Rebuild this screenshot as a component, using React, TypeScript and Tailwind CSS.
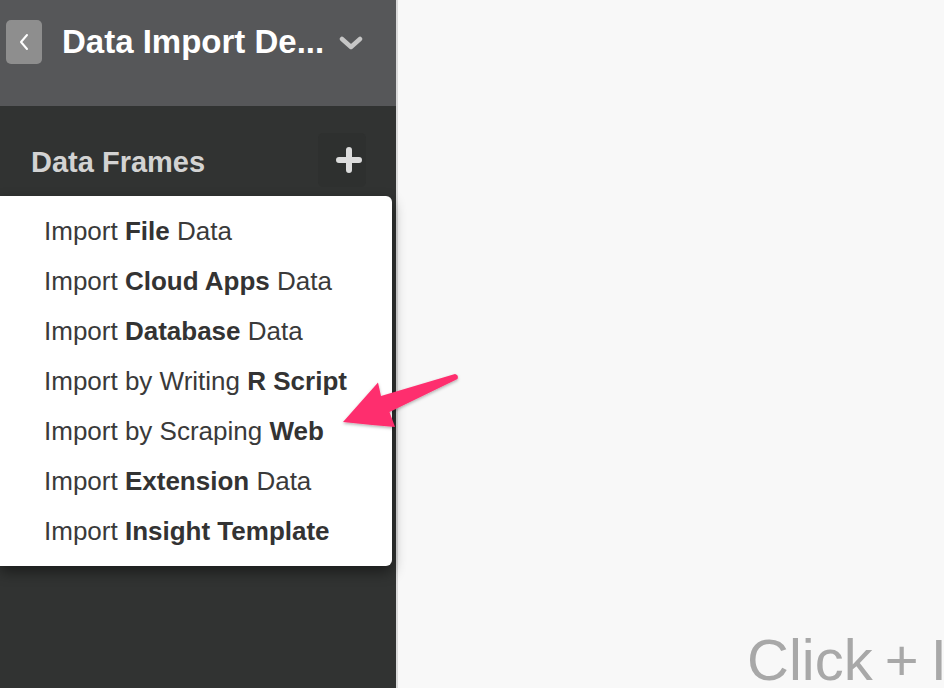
import React from "react";

const items: { pre: string; bold: string; post: string }[] = [
  { pre: "Import ", bold: "File", post: " Data" },
  { pre: "Import ", bold: "Cloud Apps", post: " Data" },
  { pre: "Import ", bold: "Database", post: " Data" },
  { pre: "Import by Writing ", bold: "R Script", post: "" },
  { pre: "Import by Scraping ", bold: "Web", post: "" },
  { pre: "Import ", bold: "Extension", post: " Data" },
  { pre: "Import ", bold: "Insight Template", post: "" },
];

function ImportMenu() {
  return (
    <div className="absolute left-0 top-[196px] w-[392px] rounded-r-[6px] bg-white py-[10px] shadow-[0_6px_14px_rgba(0,0,0,0.45)]">
      {items.map((it) => (
        <div key={it.bold} className="whitespace-nowrap pl-[44px] text-[26px] leading-[50px] text-[#3a3a3a]">
          {it.pre}
          <span className="font-bold text-[#333]">{it.bold}</span>
          {it.post}
        </div>
      ))}
    </div>
  );
}

export default function App() {
  return (
    <div className="relative flex h-[688px] w-[944px] overflow-hidden font-['Liberation_Sans',Arial,sans-serif]">
      {/* sidebar */}
      <div className="relative flex w-[398px] shrink-0 flex-col border-r-2 border-[#dadada] bg-[#313332]">
        <div className="flex h-[106px] items-start bg-[#565759] pl-[6px] pt-[20px]">
          <button className="flex h-[44px] w-[36px] items-center justify-center rounded-[5px] bg-[#8e8e8e]">
            <svg width="12" height="18" viewBox="0 0 12 18">
              <polyline points="9,2 3,9 9,16" fill="none" stroke="#fff" strokeWidth="2" strokeLinecap="round" strokeLinejoin="round" />
            </svg>
          </button>
          <div className="ml-[20px] whitespace-nowrap text-[33px] font-bold leading-[44px] text-white">Data Import De...</div>
          <svg className="ml-[15px] mt-[16px]" width="24" height="15" viewBox="0 0 24 15">
            <polyline points="3,3 12,11 21,3" fill="none" stroke="#c6c6c6" strokeWidth="4.5" strokeLinecap="round" strokeLinejoin="round" />
          </svg>
        </div>

        <div className="mt-[27px] flex items-start pl-[31px] pr-[30px]">
          <div className="flex-1 text-[29px] font-bold leading-[58px] text-[#d3d3d3]">Data Frames</div>
          <button className="flex h-[54px] w-[48px] items-center justify-center rounded-[5px] bg-[#2e302f]">
            <svg width="26" height="26" viewBox="0 0 26 26" className="ml-[14px]">
              <path d="M13 3v20M3 13h20" stroke="#dcdcdc" strokeWidth="6" strokeLinecap="round" />
            </svg>
          </button>
        </div>

        <ImportMenu />
      </div>

      {/* main pane */}
      <div className="flex-1 overflow-hidden bg-[#f8f8f8] pl-[349px] pt-[631px]">
        <div className="whitespace-nowrap text-[58px] leading-none text-[#a8a8a8] [word-spacing:-4px]">Click + Import Data</div>
      </div>

      {/* annotation arrow */}
      <svg className="pointer-events-none absolute left-0 top-0" width="944" height="688" viewBox="0 0 944 688">
        <defs>
          <filter id="sh" x="-20%" y="-20%" width="140%" height="140%">
            <feDropShadow dx="0" dy="1.5" stdDeviation="1.5" floodColor="#000" floodOpacity="0.3" />
          </filter>
        </defs>
        <path
          d="M343 422 L378 382.5 L381 396 L455 374 Q459 375 457.5 379 L389.5 412 L395 427 Q370 425 343 422 Z"
          fill="#fe2f6e"
          filter="url(#sh)"
        />
      </svg>
    </div>
  );
}
